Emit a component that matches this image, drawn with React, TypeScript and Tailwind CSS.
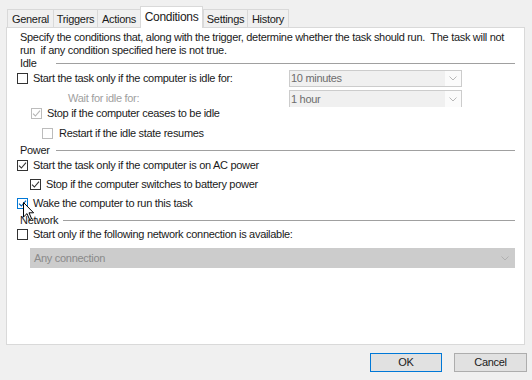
import React from "react";

const tabs = [
  { label: "General", w: "w-[46px]" },
  { label: "Triggers", w: "w-[44px]" },
  { label: "Actions", w: "w-[43px]" },
  { label: "Conditions", w: "w-[63px]", active: true },
  { label: "Settings", w: "w-[44px]" },
  { label: "History", w: "w-[42px]" },
];

type BoxProps = { checked?: boolean; disabled?: boolean; hover?: boolean };

const CheckBox = ({ checked, disabled, hover }: BoxProps) => {
  const border = hover ? "border-[#0078d7]" : disabled ? "border-[#bcbcbc]" : "border-[#333333]";
  const tick = hover ? "#0060b0" : disabled ? "#b5b5b5" : "#333333";
  return (
    <span className={`flex h-[11px] w-[11px] shrink-0 items-center justify-center border bg-white ${border}`}>
      {checked && (
        <svg width="9" height="9" viewBox="0 0 9 9">
          <path d="M1 4.6 L3.4 7 L8 1.6" fill="none" stroke={tick} strokeWidth="1.1" />
        </svg>
      )}
    </span>
  );
};

const Chevron = ({ color = "#a0a0a0" }: { color?: string }) => (
  <svg width="8" height="5" viewBox="0 0 8 5">
    <path d="M0.5 0.5 L4 4 L7.5 0.5" fill="none" stroke={color} strokeWidth="1" />
  </svg>
);

const Group = ({ label }: { label: string }) => (
  <div className="flex h-[13px] items-center pl-[3px]">
    <span className="min-w-[31px] leading-[13px]">{label}</span>
    <span className="ml-[5px] h-px flex-1 bg-[#a0a0a0]" />
  </div>
);

const Combo = ({ value, cut }: { value: string; cut?: boolean }) => (
  <div className={`flex h-[17px] w-[173px] border border-[#cccccc] ${cut ? "border-b-0" : ""}`}>
    <div className="flex flex-1 items-center bg-[#f0f0f0] pl-[1px] text-[#6d6d6d]">{value}</div>
    <div className="flex w-[16px] items-center justify-center bg-[#fbfbfb]">
      <Chevron color="#b8b8b8" />
    </div>
  </div>
);

const Row = ({
  indent = "",
  top,
  children,
}: {
  indent?: string;
  top: string;
  children: React.ReactNode;
}) => <div className={`flex h-[12px] items-center gap-[5px] ${indent} ${top}`}>{children}</div>;

export default function App() {
  return (
    <div
      className="relative h-[380px] w-[532px] overflow-hidden bg-[#f0f0f0] text-[11px] tracking-[-0.3px] text-[#1a1a1a]"
      style={{ fontFamily: '"Liberation Sans", Arial, sans-serif' }}
    >
      {/* tab strip */}
      <div className="flex h-[27px] items-end pl-[7px]">
        {tabs.map((t, i) =>
          t.active ? (
            <div
              key={t.label}
              className={`relative z-10 -mb-px flex h-[22px] items-center justify-center border border-b-0 border-[#d9d9d9] bg-white pb-[1px] text-[12px] ${t.w}`}
            >
              {t.label}
            </div>
          ) : (
            <div
              key={t.label}
              className={`flex h-[18px] items-center justify-center border-t border-[#d9d9d9] pt-px ${
                i === tabs.length - 1 ? "border-x" : "border-l"
              } ${t.w}`}
            >
              {t.label}
            </div>
          )
        )}
      </div>

      {/* panel */}
      <div className="ml-[6px] flex h-[318px] w-[519px] flex-col border border-[#d9d9d9] bg-white pl-[10px] pr-[9px]">
        <div className="mt-[3px] pl-[3px] leading-[13px]">
          <div>
            Specify the conditions that, along with the trigger, determine whether the task should run.&nbsp; The
            task will not
          </div>
          <div>run&nbsp; if any condition specified here is not true.</div>
        </div>

        <Group label="Idle" />
        <div className="-mt-px flex h-[18px] items-center">
          <div className="flex w-[272px] items-center gap-[5px]">
            <CheckBox />
            <span>Start the task only if the computer is idle for:</span>
          </div>
          <Combo value="10 minutes" />
        </div>
        <div className="mt-[3px] flex h-[17px] items-center">
          <div className="w-[272px] pl-[51px] text-[#a0a0a0]">Wait for idle for:</div>
          <Combo value="1 hour" cut />
        </div>
        <Row indent="pl-[14px]" top="mt-0">
          <CheckBox checked disabled />
          <span>Stop if the computer ceases to be idle</span>
        </Row>
        <Row indent="pl-[25px]" top="mt-[8px]">
          <CheckBox disabled />
          <span className="ml-[1px]">Restart if the idle state resumes</span>
        </Row>

        <div className="mt-[5px]">
          <Group label="Power" />
        </div>
        <Row top="mt-[2px]">
          <CheckBox checked />
          <span>Start the task only if the computer is on AC power</span>
        </Row>
        <Row indent="pl-[13px]" top="mt-[7px]">
          <CheckBox checked />
          <span>Stop if the computer switches to battery power</span>
        </Row>
        <Row top="mt-[7px]">
          <CheckBox checked hover />
          <span>Wake the computer to run this task</span>
        </Row>

        <div className="mt-[5px]">
          <Group label="Network" />
        </div>
        <Row top="mt-[1px]">
          <CheckBox />
          <span>Start only if the following network connection is available:</span>
        </Row>
        <div className="ml-[13px] mt-[8px] flex h-[20px] items-center justify-between bg-[#cccccc] pl-[4px] pr-[6px] text-[#8a8a8a]">
          <span>Any connection</span>
          <Chevron color="#b0b0b0" />
        </div>
      </div>

      {/* buttons */}
      <div className="mt-[8px] flex justify-end gap-[12px] pr-[5px]">
        <button className="h-[19px] w-[72px] border border-[#0078d7] bg-[#e1e1e1] text-[11px]">OK</button>
        <button className="h-[19px] w-[73px] border border-[#adadad] bg-[#e1e1e1] text-[11px]">Cancel</button>
      </div>

      {/* mouse pointer */}
      <svg className="absolute left-[23px] top-[202px]" width="12" height="19" viewBox="0 0 12 19">
        <path
          d="M0.5 0.5 L0.5 15 L4 11.6 L6.6 17.6 L8.6 16.7 L6 10.8 L10.6 10.8 Z"
          fill="white"
          stroke="black"
          strokeWidth="1"
        />
      </svg>
    </div>
  );
}
